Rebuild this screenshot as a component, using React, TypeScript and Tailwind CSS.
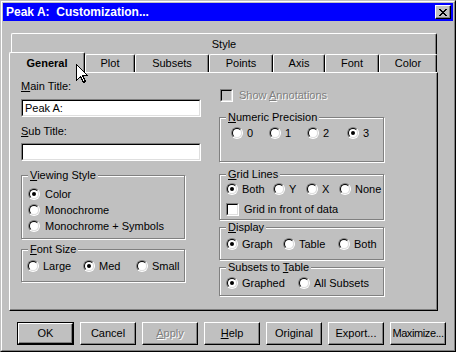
import type { ReactNode } from 'react';

const tabs = [
  { id: 1, label: 'General', w: 'w-[76px]' },
  { id: 2, label: 'Plot', w: 'w-[50px]' },
  { id: 3, label: 'Subsets', w: 'w-[74px]' },
  { id: 4, label: 'Points', w: 'w-[64px]' },
  { id: 5, label: 'Axis', w: 'w-[52px]' },
  { id: 6, label: 'Font', w: 'w-[54px]' },
  { id: 7, label: 'Color', w: 'w-[58px]' },
];

const Radio = ({ on }: { on?: boolean }) => (
  <span className="flex w-[12px] h-[12px] shrink-0 rounded-full border border-t-[#808080] border-l-[#808080] border-r-white border-b-white">
    <span className="flex flex-1 items-center justify-center rounded-full border border-t-black border-l-black border-r-[#dfdfdf] border-b-[#dfdfdf] bg-white">
      {on && <span className="w-[4px] h-[4px] rounded-full bg-black" />}
    </span>
  </span>
);

const Opt = ({ on, children, className = '' }: { on?: boolean; children: ReactNode; className?: string }) => (
  <span className={`flex items-center gap-[4px] h-[16px] shrink-0 ${className}`}>
    <Radio on={on} />
    <span>{children}</span>
  </span>
);

const Check = ({ disabled }: { disabled?: boolean }) => (
  <span className="flex w-[13px] h-[13px] shrink-0 border border-t-[#808080] border-l-[#808080] border-r-white border-b-white">
    <span className={`flex-1 border border-t-black border-l-black border-r-[#dfdfdf] border-b-[#dfdfdf] ${disabled ? 'bg-[#c0c0c0]' : 'bg-white'}`} />
  </span>
);

const Group = ({ label, className = '', children }: { label: ReactNode; className?: string; children: ReactNode }) => (
  <div className={`relative border border-[#808080] shadow-[1px_1px_0_#fff,inset_1px_1px_0_#fff] ${className}`}>
    <span className="absolute -top-[7px] left-[6px] px-[2px] leading-[13px] bg-[#c0c0c0]">{label}</span>
    {children}
  </div>
);

const Btn = ({ children, disabled, className = '' }: { children: ReactNode; disabled?: boolean; className?: string }) => (
  <button
    className={`w-[56px] h-[23px] shrink-0 whitespace-nowrap bg-[#c0c0c0] border border-t-white border-l-white border-r-black border-b-black shadow-[inset_-1px_-1px_0_#808080] ${
      disabled ? 'text-[#808080] [text-shadow:1px_1px_0_#fff]' : ''
    } ${className}`}>
    {children}
  </button>
);

const App = () => {
  return (
    <div className="relative w-[456px] h-[352px] bg-[#c0c0c0] border border-t-[#c0c0c0] border-l-[#c0c0c0] border-r-black border-b-black text-[11px] leading-[13px] text-black font-['Liberation_Sans',Arial,sans-serif]">
      <div className="h-full flex flex-col p-px border border-t-white border-l-white border-r-[#808080] border-b-[#808080]">
        {/* title bar */}
        <div className="h-[18px] shrink-0 flex items-center pl-[3px] bg-[#0000ff] text-white text-[12px] font-bold whitespace-pre">
          <span>Peak A:  Customization...</span>
          <span className="ml-auto mr-[2px] w-[16px] h-[14px] flex items-center justify-center bg-[#c0c0c0] border border-t-white border-l-white border-r-black border-b-black shadow-[inset_-1px_-1px_0_#808080]">
            <svg width="8" height="7" viewBox="0 0 8 7" shapeRendering="crispEdges">
              <path d="M0 0h2v1h1v1h2V1h1V0h2v1H7v1H6v1H5v1h1v1h1v1h1v1H6V6H5V5H3v1H2v1H0V6h1V5h1V4h1V3H2V2H1V1H0z" fill="#000" />
            </svg>
          </span>
        </div>

        <div className="flex flex-col px-[6px]">
          {/* tab rows */}
          <div className="mt-[12px] ml-[2px] w-[426px] h-[21px] flex items-center justify-center rounded-t-[2px] border-t border-l border-r border-t-white border-l-white border-r-black shadow-[inset_-1px_0_0_#808080]">
            Style
          </div>
          <div className="h-[18px] flex items-end">
            {tabs.map((t) =>
              t.id === 1 ? (
                <div
                  key={t.id}
                  className={`relative z-10 ${t.w} h-[21px] -mb-[1px] flex items-center justify-center font-bold bg-[#c0c0c0] rounded-t-[2px] border-t border-l border-r border-t-white border-l-white border-r-black shadow-[inset_-1px_0_0_#808080]`}>
                  {t.label}
                </div>
              ) : (
                <div
                  key={t.id}
                  className={`${t.w} h-[18px] flex items-center justify-center rounded-t-[2px] border-t border-l border-r border-t-white border-l-white border-r-black shadow-[inset_-1px_0_0_#808080]`}>
                  {t.label}
                </div>
              )
            )}
          </div>

          {/* panel */}
          <div className="w-[429px] h-[239px] flex pl-[11px] border border-t-white border-l-white border-r-black border-b-black shadow-[inset_-1px_-1px_0_#808080]">
            <div className="w-[180px] flex flex-col">
              <div className="mt-[7px]">
                <u>M</u>ain Title:
              </div>
              <div className="mt-[6px] h-[18px] flex border border-t-[#808080] border-l-[#808080] border-r-white border-b-white">
                <div className="flex-1 flex items-center pl-[2px] bg-white border border-t-black border-l-black border-r-[#dfdfdf] border-b-[#dfdfdf]">
                  Peak A:
                </div>
              </div>
              <div className="mt-[8px]">
                <u>S</u>ub Title:
              </div>
              <div className="mt-[5px] h-[18px] flex border border-t-[#808080] border-l-[#808080] border-r-white border-b-white">
                <div className="flex-1 bg-white border border-t-black border-l-black border-r-[#dfdfdf] border-b-[#dfdfdf]" />
              </div>

              <Group
                label={
                  <>
                    <u>V</u>iewing Style
                  </>
                }
                className="mt-[14px] w-[164px] h-[64px] pt-[10px] pl-[6px] flex flex-col">
                <Opt on className="gap-[5px]">Color</Opt>
                <Opt className="gap-[5px]">Monochrome</Opt>
                <Opt className="gap-[5px]">Monochrome + Symbols</Opt>
              </Group>

              <Group
                label={
                  <>
                    <u>F</u>ont Size
                  </>
                }
                className="mt-[10px] w-[164px] h-[33px] pt-[8px] pl-[5px] flex">
                <Opt className="w-[56px]">Large</Opt>
                <Opt on className="w-[53px]">Med</Opt>
                <Opt>Small</Opt>
              </Group>
            </div>

            <div className="ml-[18px] w-[165px] flex flex-col">
              <div className="mt-[16px] ml-[1px] h-[13px] flex items-center gap-[6px]">
                <Check disabled />
                <span className="text-[#808080] [text-shadow:1px_1px_0_#fff]">
                  Show <u>A</u>nnotations
                </span>
              </div>

              <Group
                label={
                  <>
                    <u>N</u>umeric Precision
                  </>
                }
                className="mt-[15px] h-[45px] pt-[7px] pl-[11px] flex items-start">
                <Opt className="w-[38px]">0</Opt>
                <Opt className="w-[38px]">1</Opt>
                <Opt className="w-[40px]">2</Opt>
                <Opt on>3</Opt>
              </Group>

              <Group
                label={
                  <>
                    <u>G</u>rid Lines
                  </>
                }
                className="mt-[12px] h-[46px] pt-[6px] pl-[6px] flex flex-col">
                <div className="flex">
                  <Opt on className="w-[47px]">Both</Opt>
                  <Opt className="w-[33px]">Y</Opt>
                  <Opt className="w-[33px]">X</Opt>
                  <Opt>None</Opt>
                </div>
                <div className="mt-[4px] h-[16px] flex items-center gap-[5px]">
                  <Check />
                  <span>Grid in front of data</span>
                </div>
              </Group>

              <Group
                label={
                  <>
                    <u>D</u>isplay
                  </>
                }
                className="mt-[7px] h-[33px] pt-[8px] pl-[6px] flex items-start">
                <Opt on className="w-[57px]">Graph</Opt>
                <Opt className="w-[55px]">Table</Opt>
                <Opt>Both</Opt>
              </Group>

              <Group
                label={
                  <>
                    Subsets to <u>T</u>able
                  </>
                }
                className="mt-[7px] h-[29px] pt-[7px] pl-[6px] flex items-start">
                <Opt on className="w-[72px]">Graphed</Opt>
                <Opt>All Subsets</Opt>
              </Group>
            </div>
          </div>

          {/* buttons */}
          <div className="mt-[11px] ml-[8px] flex gap-[6px]">
            <div className="w-[57px] h-[23px] flex border border-black">
              <button className="flex-1 bg-[#c0c0c0] border border-t-white border-l-white border-r-black border-b-black shadow-[inset_-1px_-1px_0_#808080]">
                OK
              </button>
            </div>
            <Btn>Cancel</Btn>
            <Btn disabled>
              <u>A</u>pply
            </Btn>
            <Btn>
              <u>H</u>elp
            </Btn>
            <Btn>Original</Btn>
            <Btn>Export...</Btn>
            <Btn className="tracking-[-0.4px]">Maximize...</Btn>
          </div>
        </div>
      </div>

      {/* mouse pointer */}
      <svg
        className="absolute left-[75px] top-[63px] pointer-events-none z-20"
        width="12"
        height="20"
        viewBox="0 0 12 20"
        shapeRendering="crispEdges">
        <path d="M0.5 0.5V16.5L4.5 12.5L7.5 18.5L9.5 17.5L6.5 11.5H11.5Z" fill="#fff" stroke="#000" strokeWidth="1" />
      </svg>
    </div>
  );
};

export default App;
